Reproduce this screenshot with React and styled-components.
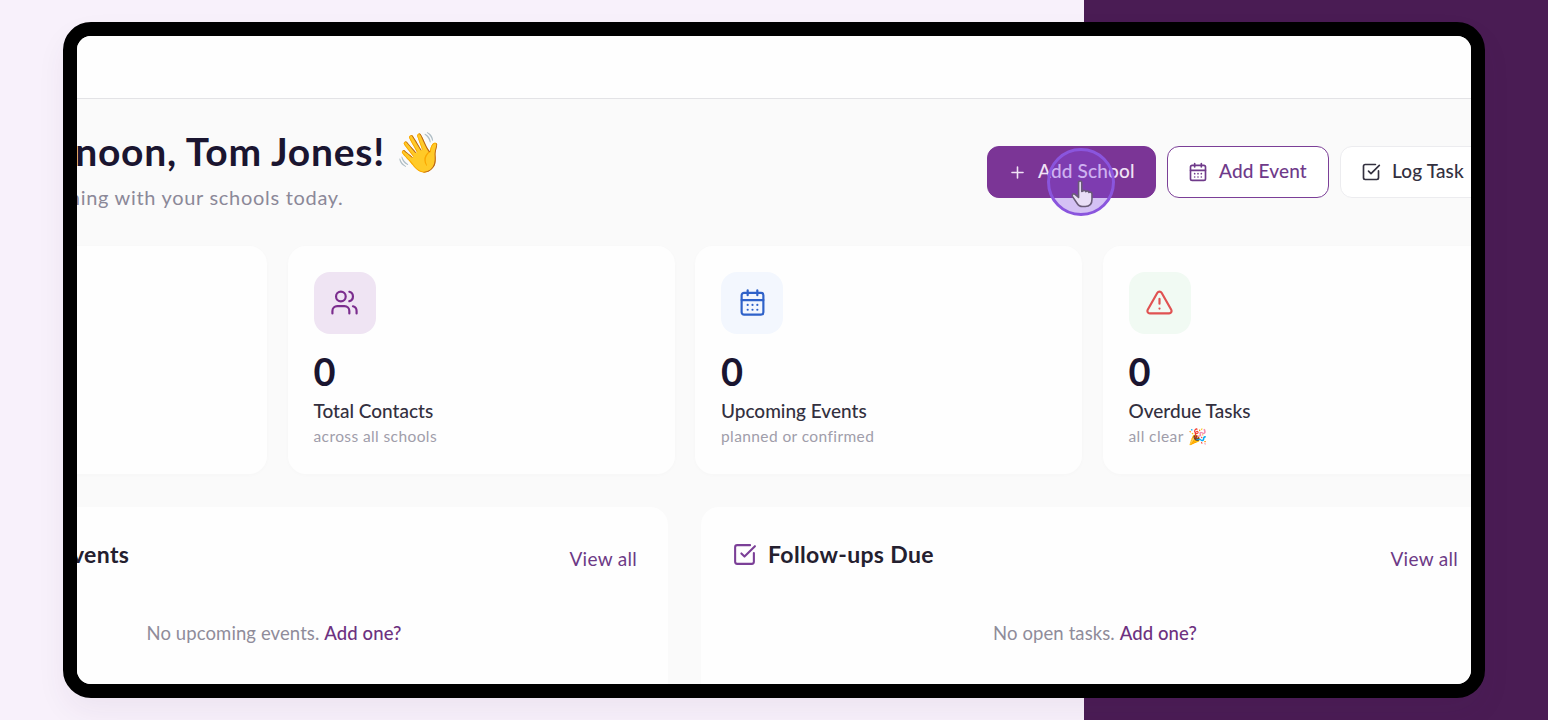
import styled, { createGlobalStyle } from "styled-components";
import { CalendarDays, Plus, SquareCheckBig, TriangleAlert, Users } from "lucide-react";

const GlobalStyle = createGlobalStyle`
  html, body {
    margin: 0;
    padding: 0;
    overflow: hidden;
  }
  * {
    box-sizing: border-box;
  }
`;

const Stage = styled.div`
  width: 1548px;
  height: 720px;
  padding: 22px 63px;
  background: linear-gradient(to right, #f8f1fb 1084px, #4a1c54 1084px);
  font-family: "Lato", "Noto Sans", sans-serif;
`;

const Frame = styled.div`
  position: relative;
  width: 1422px;
  height: 676px;
  border: 14px solid #000;
  border-radius: 28px;
  background: #fafafa;
  overflow: hidden;
  box-shadow: 0 14px 30px rgba(74, 28, 84, 0.06);
`;

const TopBar = styled.div`
  height: 63px;
  background: #fefefe;
  border-bottom: 1px solid #e3e3e6;
`;

const Main = styled.main`
  width: 1610px;
  margin-left: -197px;
`;

const HeadRow = styled.div`
  display: flex;
  justify-content: space-between;
  align-items: flex-start;
  height: 147px;
  padding-top: 29px;
`;

const Title = styled.h1`
  margin: 0;
  font-size: 39px;
  line-height: 46px;
  font-weight: 700;
  letter-spacing: 0.75px;
  color: #1a1530;
`;

const Sub = styled.p`
  margin: 10px 0 0;
  font-size: 20px;
  line-height: 26px;
  letter-spacing: 0.7px;
  color: #8b8898;
`;

const Actions = styled.div`
  display: flex;
  gap: 11px;
  margin-top: 18px;
`;

const Action = styled.button`
  display: flex;
  align-items: center;
  gap: 11px;
  height: 52px;
  width: ${(p) => p.$width}px;
  padding: 0 20px 3px;
  border-radius: 12px;
  border: 1.5px solid ${(p) => p.$border};
  background: ${(p) => p.$bg};
  color: ${(p) => p.$color};
  font-family: inherit;
  font-size: 19px;
  font-weight: 500;
  letter-spacing: 0.15px;
  white-space: nowrap;
  svg {
    flex-shrink: 0;
    margin-top: 3px;
  }
`;

const StatGrid = styled.section`
  display: grid;
  grid-template-columns: repeat(4, 387px);
  gap: 20.5px;
`;

const StatCard = styled.div`
  height: 228px;
  padding: 26px;
  background: #fefefe;
  border-radius: 18px;
  box-shadow: 0 1px 4px rgba(30, 20, 50, 0.02);
`;

const IconBox = styled.div`
  display: flex;
  align-items: center;
  justify-content: center;
  width: 62px;
  height: 62px;
  padding-bottom: 1px;
  border-radius: 16px;
  background: ${(p) => p.$bg};
  color: ${(p) => p.$color};
`;

const StatValue = styled.div`
  margin-top: 13px;
  font-size: 38px;
  line-height: 48px;
  font-weight: 700;
  color: #1a1530;
`;

const StatLabel = styled.div`
  margin-top: 4px;
  font-size: 19px;
  line-height: 24px;
  font-weight: 500;
  color: #33303f;
`;

const StatNote = styled.div`
  margin-top: 3px;
  font-size: 15.5px;
  line-height: 20px;
  letter-spacing: 0.4px;
  color: #a09daa;
`;

const PanelGrid = styled.section`
  display: grid;
  grid-template-columns: repeat(2, 788px);
  gap: 33px;
  margin-top: 33px;
`;

const Panel = styled.div`
  height: 260px;
  padding: 29px 31px;
  background: #fefefe;
  border-radius: 18px;
`;

const PanelHead = styled.div`
  display: flex;
  justify-content: space-between;
  align-items: center;
  height: 36px;
`;

const PanelTitle = styled.h2`
  display: flex;
  align-items: center;
  gap: 11px;
  margin: 0;
  font-size: 23px;
  font-weight: 700;
  letter-spacing: 0.35px;
  color: #24202f;
  svg {
    color: #7b3f97;
  }
`;

const ViewAll = styled.a`
  margin-top: 8px;
  font-size: 19px;
  letter-spacing: 0.3px;
  color: #6d3a86;
`;

const Empty = styled.p`
  margin: 48px 0 0;
  text-align: center;
  font-size: 18.5px;
  line-height: 26px;
  letter-spacing: 0.1px;
  color: #8f8c9a;
`;

const AddLink = styled.a`
  color: #6d3180;
  font-weight: 500;
`;

const CursorRing = styled.div`
  position: absolute;
  left: 970px;
  top: 112px;
  display: flex;
  align-items: center;
  justify-content: center;
  width: 68px;
  height: 68px;
  padding: 26px 0 0 4px;
  border-radius: 50%;
  border: 3px solid #8a55dd;
  background: rgba(134, 74, 232, 0.32);
`;

const stats = [
  { label: "Total Contacts", note: "across all schools", bg: "#efe4f3", color: "#7b2d8e", Icon: Users },
  { label: "Upcoming Events", note: "planned or confirmed", bg: "#f3f7fe", color: "#2f62c9", Icon: CalendarDays },
  { label: "Overdue Tasks", note: "all clear 🎉", bg: "#f1faf3", color: "#e05252", Icon: TriangleAlert },
];

function HandCursor() {
  return (
    <svg width="34" height="32" viewBox="0 0 34 36" fill="#e9def6" stroke="#6a5c78" strokeWidth="1.8" strokeLinejoin="round">
      <path d="M12 4c0-2.400 3.600-2.400 3.600 0v10l.9-.2c1.400-1.600 3.200-1 3.600.4 1.400-1.200 3.200-.6 3.600.9 1.600-.9 3.400 0 3.400 1.800v6c0 5.200-3 8.100-7.500 8.100h-3c-3.300 0-5-1.500-6.500-4l-5-7.500c-1.100-2 1.300-3.700 3-2.200l3.900 3.500z" />
    </svg>
  );
}

export default function App() {
  return (
    <Stage>
      <GlobalStyle />
      <Frame>
        <TopBar />
        <Main>
          <HeadRow>
            <div>
              <Title>Good afternoon, Tom Jones! 👋</Title>
              <Sub>Here's what's happening with your schools today.</Sub>
            </div>
            <Actions>
              <Action $width={169} $border="#7b3596" $bg="#7b3596" $color="#f0e2f5">
                <Plus size={19} />
                Add School
              </Action>
              <Action $width={162} $border="#7b3f97" $bg="#fff" $color="#6f3a8a">
                <CalendarDays size={20} />
                Add Event
              </Action>
              <Action $width={150} $border="#ececef" $bg="#fff" $color="#33303f">
                <SquareCheckBig size={20} />
                Log Task
              </Action>
            </Actions>
          </HeadRow>
          <StatGrid>
            {/* this card sits almost entirely off the left edge of the frame */}
            <StatCard />
            {stats.map(({ label, note, bg, color, Icon }) => (
              <StatCard key={label}>
                <IconBox $bg={bg} $color={color}>
                  <Icon size={29} strokeWidth={1.8} />
                </IconBox>
                <StatValue>0</StatValue>
                <StatLabel>{label}</StatLabel>
                <StatNote>{note}</StatNote>
              </StatCard>
            ))}
          </StatGrid>
          <PanelGrid>
            <Panel>
              <PanelHead>
                <PanelTitle>
                  <CalendarDays size={24} />
                  Upcoming Events
                </PanelTitle>
                <ViewAll>View all</ViewAll>
              </PanelHead>
              <Empty>
                No upcoming events. <AddLink>Add one?</AddLink>
              </Empty>
            </Panel>
            <Panel>
              <PanelHead>
                <PanelTitle>
                  <SquareCheckBig size={25} />
                  Follow-ups Due
                </PanelTitle>
                <ViewAll>View all</ViewAll>
              </PanelHead>
              <Empty>
                No open tasks. <AddLink>Add one?</AddLink>
              </Empty>
            </Panel>
          </PanelGrid>
        </Main>
        <CursorRing>
          <HandCursor />
        </CursorRing>
      </Frame>
    </Stage>
  );
}
